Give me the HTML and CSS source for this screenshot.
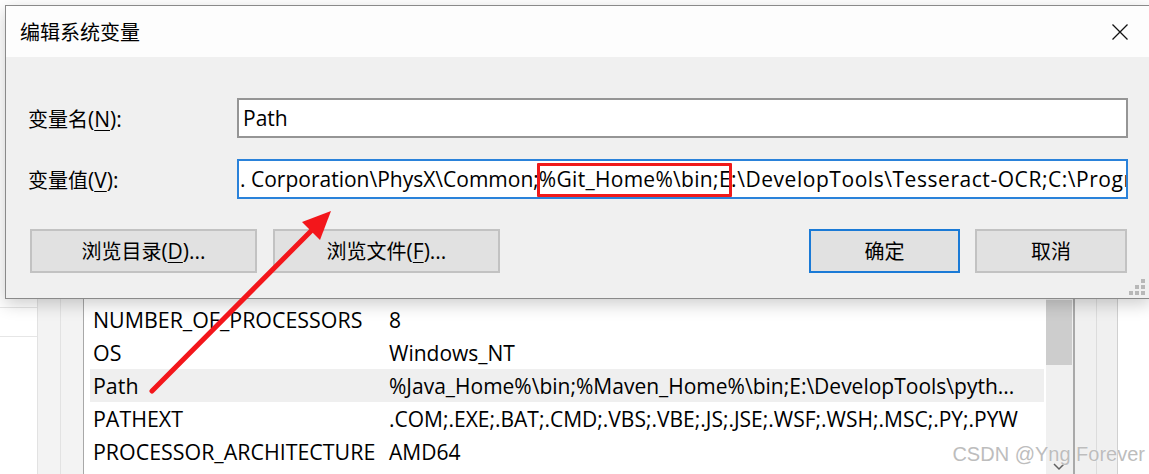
FILE: index.html
```html
<!DOCTYPE html>
<html lang="zh-CN">
<head>
<meta charset="utf-8">
<title>编辑系统变量</title>
<link rel="stylesheet" href="styles.css">
</head>
<body>
  <section class="dialog">
    <header class="titlebar">
      <span class="cn title">编辑系统变量</span>
      <svg class="close" width="16" height="16" viewBox="0 0 16 16"><path d="M0.5 0.5 L15.5 15.5 M15.5 0.5 L0.5 15.5" stroke="#111" stroke-width="1.3" fill="none"/></svg>
    </header>
    <div class="body">
      <div class="form">
        <label class="label"><span class="cn">变量名</span>(<u>N</u>):</label>
        <div class="field">Path</div>
        <label class="label"><span class="cn">变量值</span>(<u>V</u>):</label>
        <div class="field focus">. Corporation\PhysX\Common;<span class="mark">%Git_Home%\bin;</span><span class="tail">E:\DevelopTools\Tesseract-OCR;C:\Program Files\Git\cmd</span></div>
      </div>
      <div class="buttons">
        <div class="group">
          <button class="btn wide"><span class="cn">浏览目录</span>(<u>D</u>)...</button>
          <button class="btn wide"><span class="cn">浏览文件</span>(<u>F</u>)...</button>
        </div>
        <div class="group right">
          <button class="btn primary"><span class="cn">确定</span></button>
          <button class="btn cancel"><span class="cn">取消</span></button>
        </div>
      </div>
      <div class="grip-row">
        <svg class="grip" width="16" height="18" viewBox="0 0 16 18">
          <rect x="12" y="1" width="4" height="4" fill="#b8b8b8"/>
          <rect x="6" y="7" width="4" height="4" fill="#b8b8b8"/>
          <rect x="12" y="7" width="4" height="4" fill="#b8b8b8"/>
          <rect x="0" y="13" width="4" height="4" fill="#b8b8b8"/>
          <rect x="6" y="13" width="4" height="4" fill="#b8b8b8"/>
          <rect x="12" y="13" width="4" height="4" fill="#b8b8b8"/>
        </svg>
      </div>
    </div>
  </section>

  <div class="behind">
    <div class="pane-left"><div class="hline first"></div><div class="hline"></div></div>
    <div class="gutter"><div class="gcol"></div><div class="gcol last"></div></div>
    <div class="list">
      <div class="row"><span class="name">NUMBER_OF_PROCESSORS</span><span class="val">8</span></div>
      <div class="row"><span class="name">OS</span><span class="val">Windows_NT</span></div>
      <div class="row selected"><span class="name">Path</span><span class="val">%Java_Home%\bin;%Maven_Home%\bin;E:\DevelopTools\pyth...</span></div>
      <div class="row"><span class="name">PATHEXT</span><span class="val">.COM;.EXE;.BAT;.CMD;.VBS;.VBE;.JS;.JSE;.WSF;.WSH;.MSC;.PY;.PYW</span></div>
      <div class="row"><span class="name">PROCESSOR_ARCHITECTURE</span><span class="val">AMD64</span></div>
    </div>
    <div class="vscroll">
      <div class="thumb"></div>
      <svg class="down" width="12" height="8" viewBox="0 0 12 8"><polyline points="1,1 6,6 11,1" fill="none" stroke="#606060" stroke-width="1.5"/></svg>
    </div>
    <div class="frame"><div class="fcol"></div><div class="fcol"></div></div>
    <div class="outer"></div>
  </div>

  <svg class="arrow" width="1149" height="474" viewBox="0 0 1149 474">
    <line x1="152" y1="391" x2="316" y2="226" stroke="#f3161b" stroke-width="5" stroke-linecap="round"/>
    <polygon points="331,211 302,222 320,240" fill="#f3161b"/>
  </svg>

  <div class="watermark">CSDN @Yng Forever</div>
</body>
</html>
```

FILE: styles.css
```css
* { box-sizing: border-box; }

html, body {
  margin: 0;
  padding: 0;
}

body {
  position: relative;
  width: 1149px;
  height: 474px;
  overflow: hidden;
  background: #fff;
  color: #000;
  font-family: "Open Sans", "Noto Sans CJK SC", sans-serif;
  font-size: 21px;
}

.cn {
  font-family: "Noto Sans CJK SC", "Open Sans", sans-serif;
  font-size: 20px;
}

u { text-decoration-thickness: 1px; text-underline-offset: 3px; }

/* ---------- dialog ---------- */
.dialog {
  position: relative;
  z-index: 2;
  margin: 5px 0 0 5px;
  width: 1146px;
  border: 1px solid #8a8a8a;
  background: #f0f0f0;
  box-shadow: 0 5px 16px rgba(0, 0, 0, 0.2);
}

.titlebar {
  height: 51px;
  background: #fdfdfd;
  display: flex;
  align-items: center;
  justify-content: space-between;
  padding: 0 22px 0 14px;
}

.title { line-height: 1; }

.body {
  height: 241px;
  padding: 41px 0 1px 0;
}

.form {
  display: grid;
  grid-template-columns: 209px 891px;
  row-gap: 21px;
  align-items: center;
  padding-left: 22px;
}

.label {
  padding-top: 3px;
  line-height: 1;
  white-space: nowrap;
}

.field {
  height: 40px;
  border: 2px solid #959595;
  background: #fff;
  padding: 0 4px;
  line-height: 36px;
  white-space: nowrap;
  overflow: hidden;
}

.field.focus {
  border-color: #2a82da;
  padding-left: 1px;
  padding-right: 0;
}

.mark {
  position: relative;
  letter-spacing: 0.3px;
}

.mark::after {
  content: "";
  position: absolute;
  left: -2px;
  right: -13px;
  top: -2px;
  bottom: -4px;
  border: 3px solid #f01a1a;
  border-radius: 1px;
}

.tail { letter-spacing: 0.55px; }

.buttons {
  display: flex;
  justify-content: space-between;
  width: 1121px;
  margin-top: 30px;
  padding-left: 24px;
}

.group {
  display: flex;
  gap: 16px;
}

.group.right { gap: 15px; }

.btn {
  height: 44px;
  padding: 0;
  border: 2px solid #c2c2c2;
  background: #e1e1e1;
  color: #000;
  font: inherit;
  display: flex;
  align-items: center;
  justify-content: center;
  line-height: 1;
}

.btn.wide { width: 227px; }
.btn.primary { width: 151px; border-color: #1a7ad6; }
.btn.cancel { width: 152px; }

.grip-row {
  display: flex;
  justify-content: flex-end;
  height: 19px;
  margin-top: 5px;
  padding-right: 5px;
}

/* ---------- window behind ---------- */
.behind {
  display: flex;
  height: 175px;
}

.pane-left {
  width: 37px;
  background: #fff;
  padding-top: 8px;
}

.hline {
  height: 1px;
  background: #e6e6e6;
}

.hline.first { margin-bottom: 28px; }

.gutter {
  width: 47px;
  display: flex;
  border-left: 1px solid #e2e2e2;
  border-right: 1px solid #a8a8a8;
  background: #f3f3f3;
}

.gcol { flex: 1; }
.gcol:first-child { border-right: 1px solid #e2e2e2; }

.list {
  width: 962px;
  background: #fff;
  padding-top: 4px;
  font-size: 21.4px;
}

.row {
  display: flex;
  align-items: center;
  height: 33px;
  margin: 0 2px 0 6px;
  padding-left: 3px;
  white-space: nowrap;
}

.row.selected { background: #efefef; }

.name { width: 296px; flex: none; }

.val { font-size: 21px; }

.vscroll {
  width: 27px;
  background: #f0f0f0;
  display: flex;
  flex-direction: column;
  align-items: center;
  justify-content: space-between;
  padding: 1px 1px 3px 0;
}

.thumb {
  width: 26px;
  height: 65px;
  background: #cdcdcd;
}

.frame {
  width: 45px;
  display: flex;
  border-left: 2px solid #a9a9a9;
  background: #f0f0f0;
}

.fcol { flex: 1; }
.fcol:first-child { border-right: 1px solid #dcdcdc; }
.fcol:last-child { border-right: 1px solid #d0d0d0; }

.outer {
  flex: 1;
  background: #fff;
}

/* ---------- annotations ---------- */
.arrow {
  position: absolute;
  left: 0;
  top: 0;
  z-index: 5;
  pointer-events: none;
}

.watermark {
  position: absolute;
  z-index: 6;
  right: 4px;
  top: 444px;
  font-family: "Liberation Sans", Arial, sans-serif;
  font-size: 20px;
  line-height: 20px;
  color: #bdbdbd;
  text-shadow: 0 0 1px #fff;
}
```
